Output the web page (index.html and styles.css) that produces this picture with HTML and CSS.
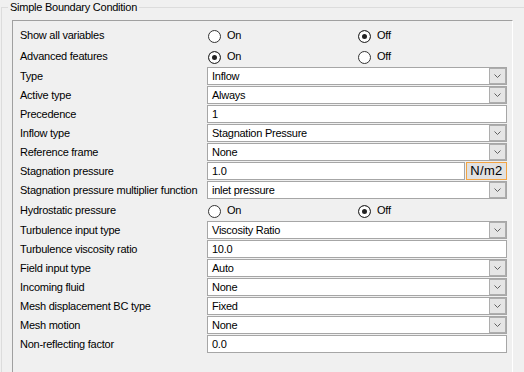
FILE: index.html
```html
<!DOCTYPE html>
<html lang="en">
<head>
  <meta charset="UTF-8">
  <title>Simple Boundary Condition</title>
  <link rel="stylesheet" href="styles.css">
</head>
<body>
  <fieldset class="group">
    <legend>Simple Boundary Condition</legend>
    <div class="panel">

      <div class="row row-radio">
        <span class="label">Show all variables</span>
        <div class="radios">
          <span class="option"><i class="radio"></i>On</span>
          <span class="option"><i class="radio checked"></i>Off</span>
        </div>
      </div>

      <div class="row row-radio">
        <span class="label">Advanced features</span>
        <div class="radios">
          <span class="option"><i class="radio checked"></i>On</span>
          <span class="option"><i class="radio"></i>Off</span>
        </div>
      </div>

      <div class="row">
        <span class="label">Type</span>
        <div class="combo"><span class="value">Inflow</span><span class="drop"><svg width="7" height="4" viewBox="0 0 7 4"><polyline points="0.5,0.5 3.5,3.5 6.5,0.5" /></svg></span></div>
      </div>

      <div class="row">
        <span class="label">Active type</span>
        <div class="combo"><span class="value">Always</span><span class="drop"><svg width="7" height="4" viewBox="0 0 7 4"><polyline points="0.5,0.5 3.5,3.5 6.5,0.5" /></svg></span></div>
      </div>

      <div class="row">
        <span class="label">Precedence</span>
        <div class="field"><span class="value">1</span></div>
      </div>

      <div class="row">
        <span class="label">Inflow type</span>
        <div class="combo"><span class="value">Stagnation Pressure</span><span class="drop"><svg width="7" height="4" viewBox="0 0 7 4"><polyline points="0.5,0.5 3.5,3.5 6.5,0.5" /></svg></span></div>
      </div>

      <div class="row">
        <span class="label">Reference frame</span>
        <div class="combo"><span class="value">None</span><span class="drop"><svg width="7" height="4" viewBox="0 0 7 4"><polyline points="0.5,0.5 3.5,3.5 6.5,0.5" /></svg></span></div>
      </div>

      <div class="row">
        <span class="label">Stagnation pressure</span>
        <div class="field short"><span class="value">1.0</span></div>
        <span class="unit-btn">N/m2</span>
      </div>

      <div class="row">
        <span class="label">Stagnation pressure multiplier function</span>
        <div class="combo"><span class="value">inlet pressure</span><span class="drop"><svg width="7" height="4" viewBox="0 0 7 4"><polyline points="0.5,0.5 3.5,3.5 6.5,0.5" /></svg></span></div>
      </div>

      <div class="row row-radio">
        <span class="label">Hydrostatic pressure</span>
        <div class="radios">
          <span class="option"><i class="radio"></i>On</span>
          <span class="option"><i class="radio checked"></i>Off</span>
        </div>
      </div>

      <div class="row">
        <span class="label">Turbulence input type</span>
        <div class="combo"><span class="value">Viscosity Ratio</span><span class="drop"><svg width="7" height="4" viewBox="0 0 7 4"><polyline points="0.5,0.5 3.5,3.5 6.5,0.5" /></svg></span></div>
      </div>

      <div class="row">
        <span class="label">Turbulence viscosity ratio</span>
        <div class="field"><span class="value">10.0</span></div>
      </div>

      <div class="row">
        <span class="label">Field input type</span>
        <div class="combo"><span class="value">Auto</span><span class="drop"><svg width="7" height="4" viewBox="0 0 7 4"><polyline points="0.5,0.5 3.5,3.5 6.5,0.5" /></svg></span></div>
      </div>

      <div class="row">
        <span class="label">Incoming fluid</span>
        <div class="combo"><span class="value">None</span><span class="drop"><svg width="7" height="4" viewBox="0 0 7 4"><polyline points="0.5,0.5 3.5,3.5 6.5,0.5" /></svg></span></div>
      </div>

      <div class="row">
        <span class="label">Mesh displacement BC type</span>
        <div class="combo"><span class="value">Fixed</span><span class="drop"><svg width="7" height="4" viewBox="0 0 7 4"><polyline points="0.5,0.5 3.5,3.5 6.5,0.5" /></svg></span></div>
      </div>

      <div class="row">
        <span class="label">Mesh motion</span>
        <div class="combo"><span class="value">None</span><span class="drop"><svg width="7" height="4" viewBox="0 0 7 4"><polyline points="0.5,0.5 3.5,3.5 6.5,0.5" /></svg></span></div>
      </div>

      <div class="row">
        <span class="label">Non-reflecting factor</span>
        <div class="field"><span class="value">0.0</span></div>
      </div>

    </div>
  </fieldset>
</body>
</html>
```

FILE: styles.css
```css
/* window chrome */
* {
  box-sizing: border-box;
}

html, body {
  height: 100%;
}

body {
  margin: 0;
  background-color: #f0f0f0;
  color: #000;
  font-family: "Liberation Sans", Arial, sans-serif;
  font-size: 11px;
  letter-spacing: -0.25px;
  overflow: hidden;
}

/* group box, open to the right and bottom edge of the window */
.group {
  margin: 0 0 0 1px;
  padding: 6px 0 0 10px;
  height: 100%;
  border: 1px solid #dcdcdc;
  border-right: none;
  border-bottom: none;
  display: flex;
  flex-direction: column;
}

.group legend {
  margin-left: -4px;
  padding: 0 2px;
  line-height: 14px;
}

.panel {
  flex: 1;
  width: 501px;
  padding: 4px 5px 0 7px;
  border: 1px solid;
  border-color: #a0a0a0 #fff #fff #a0a0a0;
  border-bottom: none;
  display: flex;
  flex-direction: column;
  gap: 1px;
}

/* rows */
.row {
  display: flex;
  align-items: center;
  height: 18px;
}

.row-radio {
  height: 20px;
}

.label {
  flex: none;
  width: 187px;
  white-space: nowrap;
}

/* controls */
.combo,
.field {
  flex: none;
  width: 300px;
  height: 18px;
  border: 1px solid #a6a6a6;
  background-color: #fff;
  display: flex;
  align-items: center;
}

.field.short {
  width: 258px;
}

.value {
  flex: 1;
  padding-left: 4px;
  white-space: nowrap;
}

.drop {
  flex: none;
  width: 17px;
  height: 16px;
  background-color: #e5e5e5;
  border: 1px solid #adadad;
  display: flex;
  align-items: center;
  justify-content: center;
}

.drop svg {
  fill: none;
  stroke: #606060;
  stroke-width: 1;
}

.unit-btn {
  flex: none;
  width: 41px;
  height: 18px;
  margin-left: 1px;
  border: 1px solid #f2a443;
  background-color: #e1e1e1;
  font-size: 13px;
  letter-spacing: 0.3px;
  line-height: 16px;
  text-align: center;
}

/* radio buttons */
.radios {
  display: flex;
}

.option {
  width: 150px;
  padding-left: 1px;
  display: flex;
  align-items: center;
}

.radio {
  flex: none;
  width: 13px;
  height: 13px;
  margin: 3px 6px 0 0;
  border: 1px solid #333;
  border-radius: 50%;
  background-color: #fff;
}

.radio.checked {
  background-color: #222;
  box-shadow: inset 0 0 0 3px #fff;
}
```
